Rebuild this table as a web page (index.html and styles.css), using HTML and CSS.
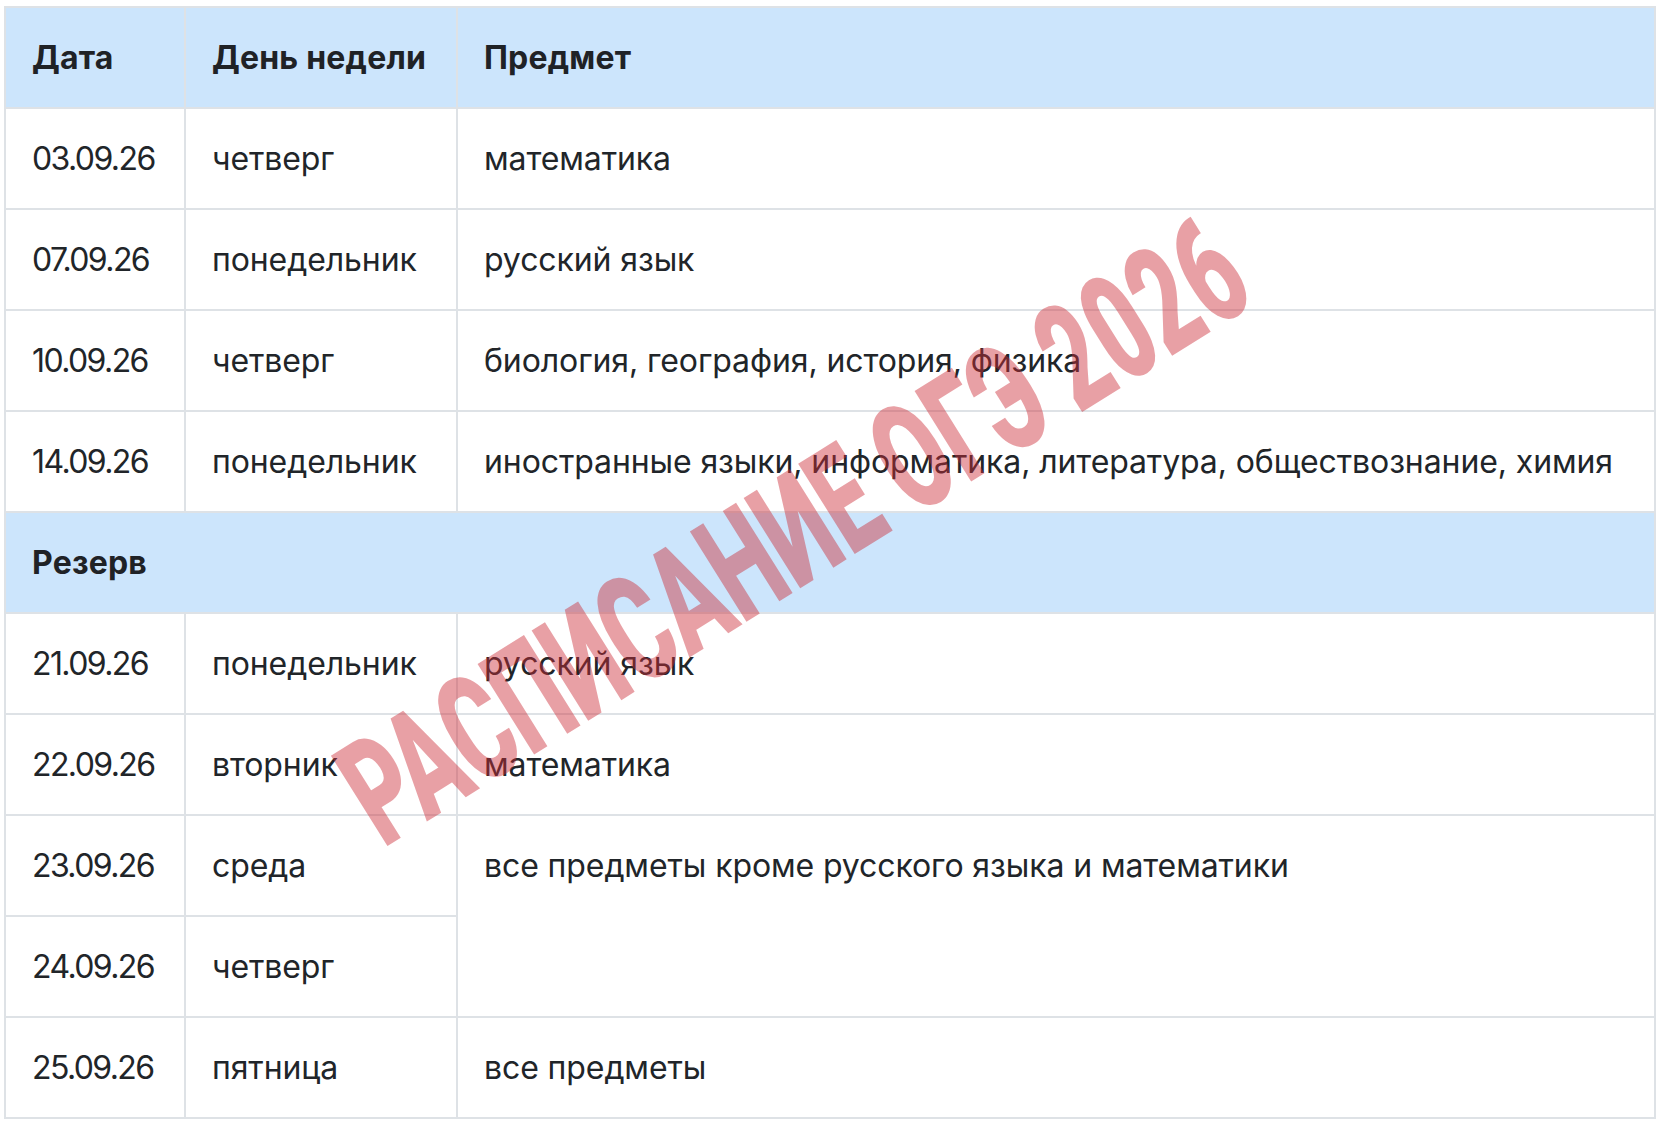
FILE: index.html
```html
<!DOCTYPE html>
<html lang="ru">
<head>
<meta charset="utf-8">
<title>Расписание ОГЭ 2026</title>
<link rel="stylesheet" href="styles.css">
</head>
<body>
<div class="wrap">
  <table class="schedule">
    <colgroup>
      <col class="c-date">
      <col class="c-day">
      <col class="c-subj">
    </colgroup>
    <tr class="head">
      <th>Дата</th>
      <th>День недели</th>
      <th>Предмет</th>
    </tr>
    <tr><td class="date">03.09.26</td><td>четверг</td><td>математика</td></tr>
    <tr><td class="date">07.09.26</td><td>понедельник</td><td>русский язык</td></tr>
    <tr><td class="date">10.09.26</td><td>четверг</td><td>биология, география, история, физика</td></tr>
    <tr><td class="date">14.09.26</td><td>понедельник</td><td>иностранные языки, информатика, литература, обществознание, химия</td></tr>
    <tr class="head"><th colspan="3">Резерв</th></tr>
    <tr><td class="date">21.09.26</td><td>понедельник</td><td>русский язык</td></tr>
    <tr><td class="date">22.09.26</td><td>вторник</td><td>математика</td></tr>
    <tr><td class="date">23.09.26</td><td>среда</td><td rowspan="2">все предметы кроме русского языка и математики</td></tr>
    <tr><td class="date">24.09.26</td><td>четверг</td></tr>
    <tr><td class="date">25.09.26</td><td>пятница</td><td>все предметы</td></tr>
  </table>
  <div class="watermark">РАСПИСАНИЕ ОГЭ 2026</div>
</div>
</body>
</html>
```
FILE: styles.css
```css
html, body {
  margin: 0;
  padding: 0;
  background: #ffffff;
}

.wrap {
  position: relative;
  padding: 6px 0 0 4px;
}

.schedule {
  border-collapse: collapse;
  table-layout: fixed;
  width: 1650px;
  font-family: "Inter", "Open Sans", sans-serif;
  font-size: 32px;
  color: #212529;
}

.c-date { width: 180px; }
.c-day { width: 272px; }
.c-subj { width: 1198px; }

.schedule th,
.schedule td {
  border: 2px solid #dee2e6;
  padding: 30px 10px 30px 26px;
  line-height: 39px;
  text-align: left;
  vertical-align: top;
  white-space: nowrap;
  overflow: hidden;
  letter-spacing: -0.1px;
}

.schedule td.date {
  letter-spacing: -1.6px;
}

.schedule th {
  font-weight: 700;
  color: #1f2226;
  letter-spacing: 0.2px;
}

.head th {
  background: #cce5fc;
}

.watermark {
  position: absolute;
  left: 794px;
  top: 532px;
  transform: translate(-50%, -50%) rotate(-32deg) scaleX(0.61);
  font-family: "Roboto", "DejaVu Sans", sans-serif;
  font-weight: 900;
  font-size: 150px;
  line-height: 0.72;
  white-space: nowrap;
  color: rgba(205, 45, 55, 0.45);
  pointer-events: none;
}
```
